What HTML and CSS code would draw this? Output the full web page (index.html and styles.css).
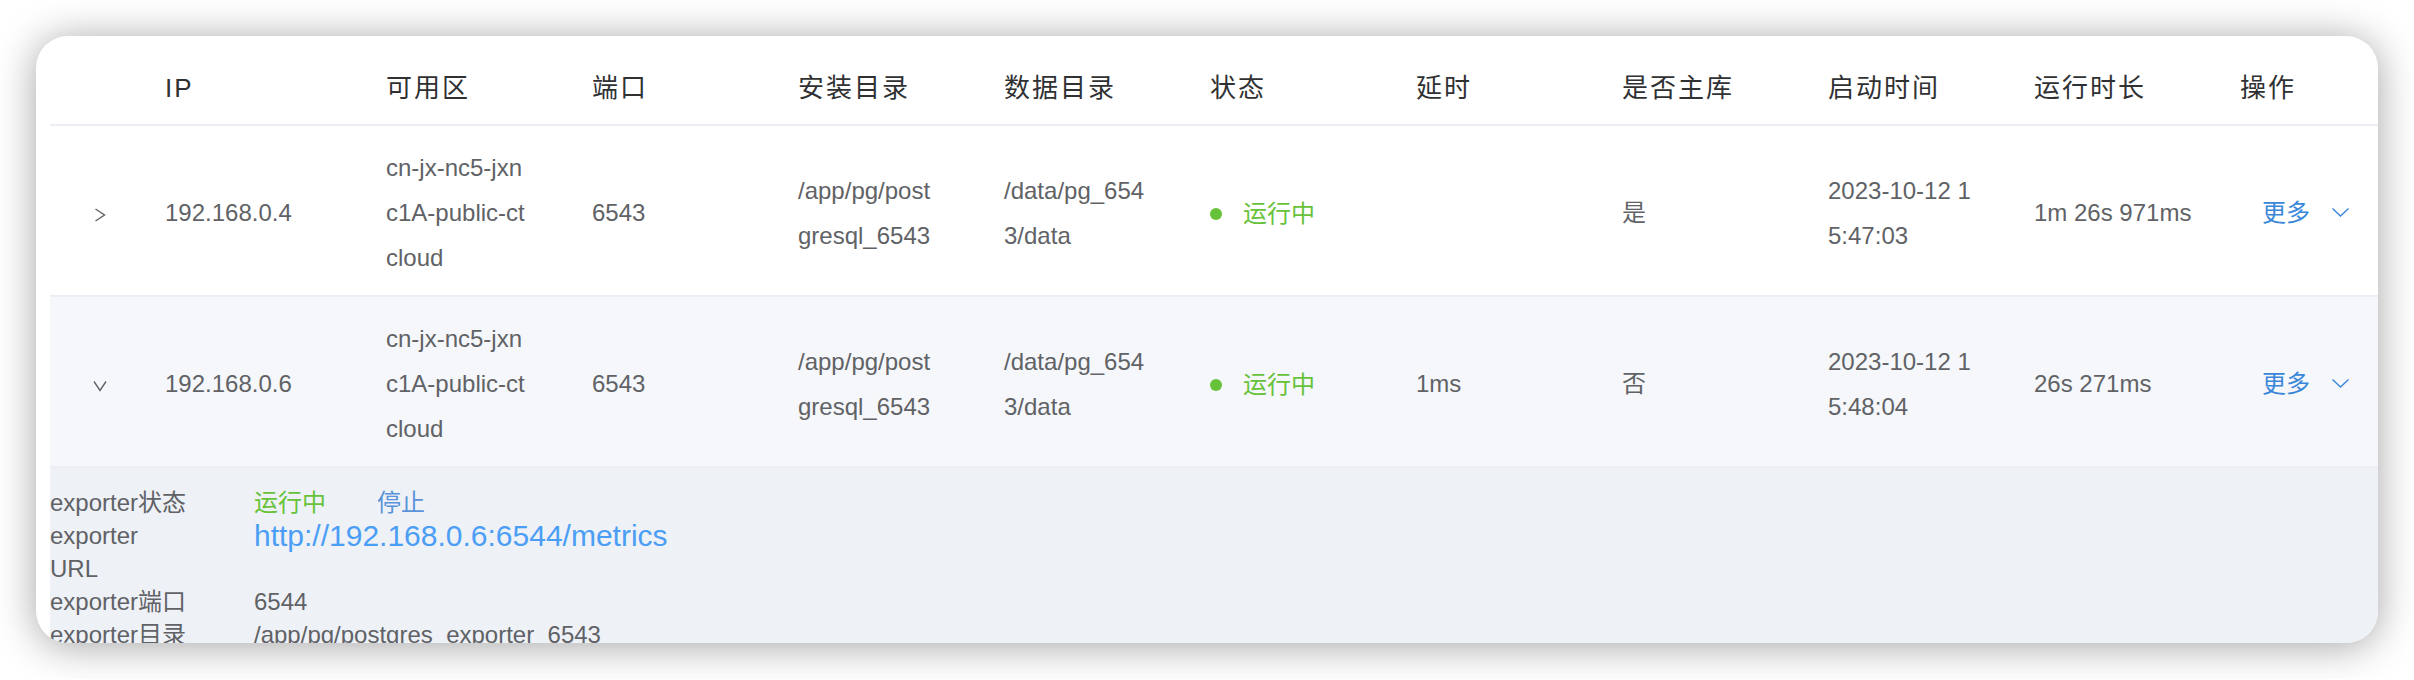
FILE: index.html
```html
<!DOCTYPE html>
<html lang="zh-CN">
<head>
<meta charset="utf-8">
<title>实例列表</title>
<link rel="stylesheet" href="styles.css">
</head>
<body>
<div class="card">
  <table class="grid">
    <colgroup>
      <col class="c-exp"><col class="c-ip">
      <col class="c-std"><col class="c-std"><col class="c-std"><col class="c-std"><col class="c-std">
      <col class="c-std"><col class="c-std"><col class="c-std"><col class="c-std"><col class="c-std">
    </colgroup>
    <thead>
      <tr>
        <th></th><th>IP</th><th>可用区</th><th>端口</th><th>安装目录</th><th>数据目录</th>
        <th>状态</th><th>延时</th><th>是否主库</th><th>启动时间</th><th>运行时长</th><th>操作</th>
      </tr>
    </thead>
    <tbody>
      <tr>
        <td class="exp"><svg class="arrow" width="14" height="14" viewBox="0 0 14 14"><polyline points="2.5,1 11.5,7 2.5,13" fill="none" stroke="#606266" stroke-width="1.4"/></svg></td>
        <td>192.168.0.4</td>
        <td>cn-jx-nc5-jxn<br>c1A-public-ct<br>cloud</td>
        <td>6543</td>
        <td>/app/pg/post<br>gresql_6543</td>
        <td>/data/pg_654<br>3/data</td>
        <td><span class="status"><i class="dot"></i>运行中</span></td>
        <td></td>
        <td>是</td>
        <td>2023-10-12 1<br>5:47:03</td>
        <td>1m 26s 971ms</td>
        <td><span class="more">更多<svg class="caret" width="17" height="9" viewBox="0 0 17 9"><polyline points="0.5,0.5 8.5,8 16.5,0.5" fill="none" stroke="#3a87d9" stroke-width="1.4"/></svg></span></td>
      </tr>
      <tr class="open">
        <td class="exp"><svg class="arrow down" width="14" height="14" viewBox="0 0 14 14"><polyline points="2.5,1 11.5,7 2.5,13" fill="none" stroke="#606266" stroke-width="1.4"/></svg></td>
        <td>192.168.0.6</td>
        <td>cn-jx-nc5-jxn<br>c1A-public-ct<br>cloud</td>
        <td>6543</td>
        <td>/app/pg/post<br>gresql_6543</td>
        <td>/data/pg_654<br>3/data</td>
        <td><span class="status"><i class="dot"></i>运行中</span></td>
        <td>1ms</td>
        <td>否</td>
        <td>2023-10-12 1<br>5:48:04</td>
        <td>26s 271ms</td>
        <td><span class="more">更多<svg class="caret" width="17" height="9" viewBox="0 0 17 9"><polyline points="0.5,0.5 8.5,8 16.5,0.5" fill="none" stroke="#3a87d9" stroke-width="1.4"/></svg></span></td>
      </tr>
      <tr class="expanded">
        <td colspan="12">
          <div class="detail">
            <div class="k">exporter状态</div>
            <div class="v"><span class="ok">运行中</span><span class="stop">停止</span></div>
            <div class="k">exporter URL</div>
            <div class="v"><a class="link" href="#">http://192.168.0.6:6544/metrics</a></div>
            <div class="k">exporter端口</div>
            <div class="v">6544</div>
            <div class="k">exporter目录</div>
            <div class="v">/app/pg/postgres_exporter_6543</div>
          </div>
        </td>
      </tr>
    </tbody>
  </table>
</div>
</body>
</html>
```

FILE: styles.css
```css
html, body {
  margin: 0;
  background: #ffffff;
}

body {
  padding: 36px;
  font-family: "Liberation Sans", "Noto Sans CJK SC", sans-serif;
  color: #606266;
}

.card {
  height: 607px;
  background: #ffffff;
  border-radius: 32px;
  overflow: hidden;
  box-shadow: 0 3px 40px rgba(0, 0, 0, 0.36);
  padding-left: 14px;
}

.grid {
  border-collapse: collapse;
  table-layout: fixed;
  width: 2376px;
}

.c-exp { width: 95px; }
.c-ip { width: 221px; }
.c-std { width: 206px; }

.grid th {
  text-align: left;
  font-weight: normal;
  font-size: 26px;
  letter-spacing: 2px;
  color: #303133;
  line-height: 46px;
  padding: 29px 20px 13px;
  border-bottom: 2px solid #ebeef5;
  white-space: nowrap;
}

.grid td {
  font-size: 24px;
  line-height: 45px;
  padding: 19px 20px 15px;
  border-bottom: 2px solid #ebeef5;
  vertical-align: middle;
  white-space: nowrap;
  color: #606266;
}

.grid td.exp {
  padding-left: 4px;
  padding-right: 0;
  text-align: center;
}

.arrow {
  display: inline-block;
  vertical-align: middle;
}

.arrow.down {
  transform: rotate(90deg);
}

.open td {
  background: #f5f7fa;
}

.status {
  color: #67c23a;
  display: inline-flex;
  align-items: center;
}

.dot {
  width: 12px;
  height: 12px;
  border-radius: 50%;
  background: #67c23a;
  margin-right: 21px;
}

.more {
  color: #3a87d9;
  margin-left: 22px;
  display: inline-flex;
  align-items: center;
}

.caret {
  margin-left: 22px;
}

.expanded td {
  background: #eef1f6;
  padding: 18px 0 0;
  line-height: 33px;
  border-bottom: none;
  vertical-align: top;
}

.detail {
  display: grid;
  grid-template-columns: 138px auto;
  column-gap: 66px;
  white-space: normal;
  font-size: 24px;
  line-height: 33px;
  color: #606266;
}

.ok {
  color: #67c23a;
}

.stop {
  color: #5a93d9;
  margin-left: 51px;
}

.link {
  color: #4b9ef5;
  font-size: 30px;
  text-decoration: none;
}
```
